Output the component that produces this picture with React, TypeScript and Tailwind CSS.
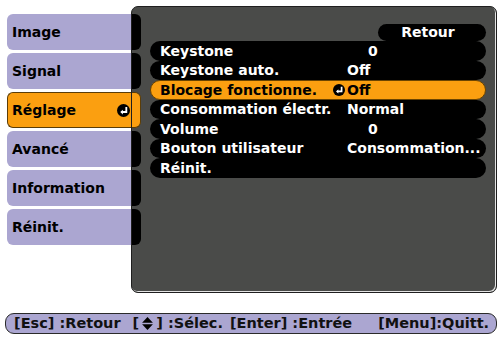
import React from "react";

const tabs = ["Image", "Signal", "Réglage", "Avancé", "Information", "Réinit."];
const selectedTab = "Réglage";

interface Row {
  label: string;
  value?: string;
  indent?: boolean;
  selected?: boolean;
}

const rows: Row[] = [
  { label: "Keystone", value: "0", indent: true },
  { label: "Keystone auto.", value: "Off" },
  { label: "Blocage fonctionne.", value: "Off", selected: true },
  { label: "Consommation électr.", value: "Normal" },
  { label: "Volume", value: "0", indent: true },
  { label: "Bouton utilisateur", value: "Consommation..." },
  { label: "Réinit." },
];

function EnterIcon({ className }: { className?: string }) {
  return (
    <svg viewBox="0 0 12 12" className={className}>
      <circle cx="6" cy="6" r="6" fill="#000" />
      <path d="M8.6 2.8V7.4H4.2" fill="none" stroke="#fff" strokeWidth="1.7" />
      <path d="M5.4 5.2L3 7.4L5.4 9.6Z" fill="#fff" />
    </svg>
  );
}

function UpDownIcon() {
  return (
    <svg viewBox="0 0 10 12" className="mx-[3px] h-[13px] w-[11px] shrink-0">
      <path d="M5 0L10 5.3H0Z" fill="#000" />
      <path d="M0 6.7H10L5 12Z" fill="#000" />
    </svg>
  );
}

export default function App() {
  return (
    <div className="h-[337px] w-[501px] overflow-hidden bg-white font-['DejaVu_Sans',sans-serif]">
      <div className="flex pl-[7px]">
        {/* menu tabs */}
        <div className="flex w-[124px] flex-col gap-[3px] pt-[14px]">
          {tabs.map((t) => {
            const sel = t === selectedTab;
            return (
              <div
                key={t}
                className={
                  sel
                    ? "flex h-[36px] items-center justify-between rounded-l-[6px] border border-r-0 border-[#5b3d08] bg-[#fb9f10] pl-[4px] pr-[1px]"
                    : "flex h-[36px] items-center rounded-l-[6px] bg-[#aba6d1] pl-[5px]"
                }
              >
                <span className="text-[14px] font-bold text-black">{t}</span>
                {sel && <EnterIcon className="h-[13px] w-[13px]" />}
              </div>
            );
          })}
        </div>

        {/* settings panel */}
        <div className="mt-[6px] flex h-[287px] w-[366px] rounded-[7px] border border-[#1f1f1f] bg-[#4a4b49] shadow-[inset_-1px_-1px_0_#e4e4e4]">
          <div className="flex w-[9px] flex-col gap-[3px] pt-[7px]">
            {tabs.map((t) =>
              t === selectedTab ? (
                <div key={t} className="h-[36px] rounded-r-[6px] border border-l-0 border-[#5b3d08] bg-[#fb9f10]" />
              ) : (
                <div key={t} className="h-[36px] rounded-r-[6px] bg-black" />
              )
            )}
          </div>

          <div className="ml-[9px] mr-[10px] flex flex-1 flex-col pt-[17px]">
            <div className="flex justify-end">
              <div className="flex h-[17px] w-[108px] items-center justify-center rounded-full bg-black pr-[8px] text-[14px] font-bold text-white">
                Retour
              </div>
            </div>
            {rows.map((r) => (
              <div
                key={r.label}
                className={
                  r.selected
                    ? "flex h-[19.5px] items-center rounded-full border border-[#6b4400] bg-[#fb9f10] pl-[9px] text-[14px] font-bold leading-none text-black"
                    : "flex h-[19.5px] items-center rounded-full bg-black pl-[10px] text-[14px] font-bold leading-none text-white"
                }
              >
                <span className="w-[173px] shrink-0 whitespace-nowrap">{r.label}</span>
                <span className="flex w-[14px] shrink-0 items-center">
                  {r.selected && <EnterIcon className="h-[12px] w-[12px]" />}
                </span>
                {r.value && (
                  <span className={r.indent ? "whitespace-nowrap pl-[21px]" : "whitespace-nowrap"}>{r.value}</span>
                )}
              </div>
            ))}
          </div>
        </div>
      </div>

      {/* key help bar */}
      <div className="ml-[5px] mt-[20px] flex h-[21px] w-[492px] items-center whitespace-nowrap rounded-[9px] border border-[#2a2a2a] bg-[#aba6d1] pl-[8px] text-[14.5px] font-bold leading-none text-[#111]">
        <span className="shrink-0">[Esc] :Retour</span>
        <span className="ml-[12px] flex shrink-0 items-center">
          [<UpDownIcon />] :Sélec.
        </span>
        <span className="ml-[7px] shrink-0">[Enter] :Entrée</span>
        <span className="ml-[26px] shrink-0">[Menu]:Quitt.</span>
      </div>
    </div>
  );
}
